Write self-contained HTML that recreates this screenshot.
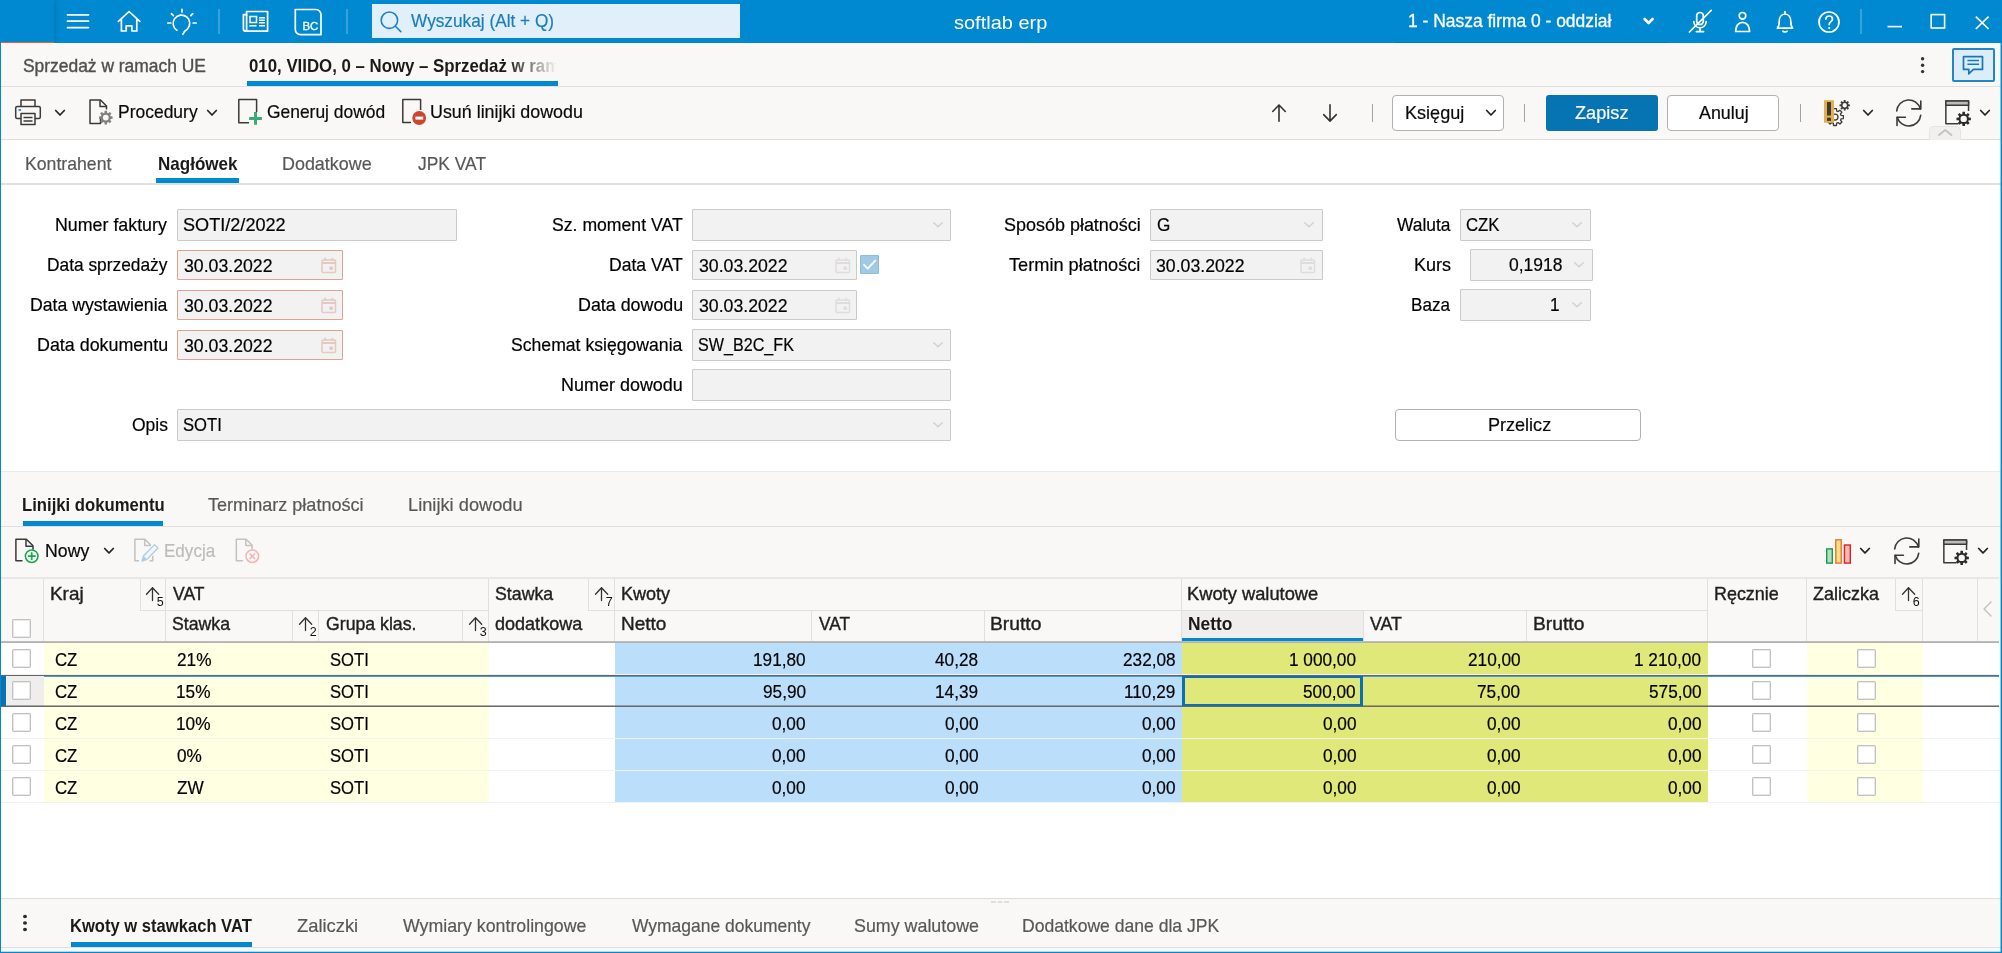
<!DOCTYPE html>
<html lang="pl"><head><meta charset="utf-8"><title>softlab erp</title>
<style>

html,body{margin:0;padding:0}
body{width:2002px;height:953px;overflow:hidden;position:relative;background:#fff;font-family:"Liberation Sans",sans-serif;font-size:18.6px;color:#000}
div,span,svg,header,nav,section,main,footer,label,button{position:absolute;box-sizing:border-box;display:block;margin:0;padding:0}
header,nav,section,main,footer{left:0;top:0}
#app{left:0;top:0;width:2002px;height:953px;will-change:transform}
.t{white-space:nowrap;line-height:20px;height:20px;transform-origin:0 0}

</style></head>
<body>
<div id="app">
<header>
<div style="left:0px;top:0px;width:2002px;height:43px;background:#0089d0;"></div>
<div style="left:1px;top:0px;width:53px;height:43px;box-shadow:2px 0 4px rgba(0,0,0,.10);"></div>
<div style="left:1px;top:42px;width:53px;height:1px;background:#e8632b;"></div>
<div style="left:1395px;top:42px;width:273px;height:1px;background:#0079b9;"></div>
<svg style="left:64px;top:8px;" width="28" height="28" viewBox="0 0 28 28" fill="none"><path d="M3.5 6.8h21M3.5 13.2h21M3.5 19.6h21" stroke="#fff" stroke-width="1.8" stroke-linecap="round"/></svg>
<svg style="left:115px;top:8px;" width="28" height="28" viewBox="0 0 28 28" fill="none"><path d="M3.4 13.4 14.1 3.5l10.7 9.9M6.4 11.2V23h4.8v-5.2h5.7V23h4.9V11.2" stroke="#fff" stroke-width="1.7" stroke-linecap="round" stroke-linejoin="round"/></svg>
<svg style="left:166px;top:4px;" width="32" height="34" viewBox="0 0 32 34" fill="none"><path d="M10.9 26.3A8.3 8.3 0 1 1 21.5 25Q17.8 27.3 16.9 30.3" stroke="#fff" stroke-width="1.7" stroke-linecap="round" stroke-linejoin="round"/><path d="M16 5.4v2.600M5.400 9.600l2 2M26.800 9.600l-2 2M1.800 19h3M27.200 19h3" stroke="#fff" stroke-width="1.7" stroke-linecap="round" stroke-linejoin="round"/></svg>
<div style="left:218px;top:9px;width:2px;height:25px;background:rgba(255,255,255,.22);"></div>
<svg style="left:241px;top:9px;" width="30" height="26" viewBox="0 0 30 26" fill="none"><path d="M5.6 2.500h21V22.100H4.400a2 2 0 0 1-2-2V5.600h3.200" stroke="#fff" stroke-width="1.7" stroke-linecap="round" stroke-linejoin="round"/><path d="M5.600 2.500v17.600a1.600 1.600 0 0 1-1.600 2" stroke="#fff" stroke-width="1.7" stroke-linecap="round" stroke-linejoin="round"/><rect x="9" y="7.500" width="6.500" height="6" stroke="#fff" stroke-width="1.500"/><path d="M18 8.800h6M18 11.300h6M18 13.800h6M8.300 16.800h7.200M18 16.800h6" stroke="#fff" stroke-width="1.400"/></svg>
<svg style="left:294px;top:7px;" width="30" height="30" viewBox="0 0 30 30" fill="none"><path d="M1.3 2.500h20.500a5.200 5.200 0 0 1 5.200 5.200V27.700H6.500a5.200 5.200 0 0 1-5.200-5.200Z" stroke="#fff" stroke-width="1.7" stroke-linecap="round" stroke-linejoin="round"/><text x="8.400" y="22.600" font-family="Liberation Sans,sans-serif" font-size="11.500" fill="#fff" stroke="#fff" stroke-width=".3" textLength="16">BC</text></svg>
<div style="left:346px;top:9px;width:2px;height:25px;background:rgba(255,255,255,.22);"></div>
<div style="left:372px;top:4px;width:368px;height:34px;background:#e0effa;"></div>
<svg style="left:379px;top:8px;" width="26" height="26" viewBox="0 0 26 26" fill="none"><circle cx="10.4" cy="12.2" r="8.2" stroke="#1a84c6" stroke-width="1.6"/><path d="M16.4 18.2 21.800 23.600" stroke="#1a84c6" stroke-width="1.600" stroke-linecap="round"/></svg>
<span class="t" style="left:410.92px;top:10.70px;color:#1a7ebd;transform:scaleX(0.9275);-webkit-text-stroke:0.2px #1a7ebd;">Wyszukaj (Alt + Q)</span>
<span class="t" style="left:954.44px;top:12.70px;font-size:19px;color:#fff;transform:scaleX(1.0527);">softlab erp</span>
<span class="t" style="left:1408.37px;top:10.70px;color:#fff;transform:scaleX(0.9372);-webkit-text-stroke:0.3px #fff;">1 - Nasza firma 0 - oddział</span>
<svg style="left:1640px;top:14px;" width="16" height="14" viewBox="0 0 16 14" fill="none"><path d="M4.6 5 8.6 9 12.6 5" stroke="#fff" stroke-width="2.6" stroke-linecap="round" stroke-linejoin="round"/></svg>
<svg style="left:1686px;top:7px;" width="28" height="30" viewBox="0 0 28 30" fill="none"><path d="M14 5.5a3.3 3.3 0 0 1 3.3 3.3v5.400a3.300 3.300 0 0 1-6.600 0V8.800A3.300 3.300 0 0 1 14 5.500Z" stroke="#fff" stroke-width="1.7" stroke-linecap="round" stroke-linejoin="round"/><path d="M7.800 14.600a6.200 6.200 0 0 0 12.400 0M14 20.800v3.600M10.400 24.600h7.200" stroke="#fff" stroke-width="1.7" stroke-linecap="round" stroke-linejoin="round"/><path d="M25.200 3.400 3.400 25" stroke="#fff" stroke-width="1.7" stroke-linecap="round" stroke-linejoin="round"/></svg>
<svg style="left:1730px;top:8px;" width="24" height="28" viewBox="0 0 24 28" fill="none"><circle cx="12.5" cy="7.8" r="3.3" stroke="#fff" stroke-width="1.7" stroke-linecap="round" stroke-linejoin="round"/><path d="M5.600 23.500c0-5.400 2.800-9.200 7-9.200s7 3.800 7 9.200Z" stroke="#fff" stroke-width="1.7" stroke-linecap="round" stroke-linejoin="round"/></svg>
<svg style="left:1773px;top:8px;" width="24" height="28" viewBox="0 0 24 28" fill="none"><path d="M4.4 20.2c1.6-1.6 1.8-3.6 1.8-6.6 0-4.2 2.200-7.600 5.800-7.600s5.800 3.400 5.800 7.600c0 3 .2 5 1.800 6.600Z" stroke="#fff" stroke-width="1.7" stroke-linecap="round" stroke-linejoin="round"/><path d="M12 3.600v2.200M10 23.200c.6.900 3.400.900 4 0" stroke="#fff" stroke-width="1.7" stroke-linecap="round" stroke-linejoin="round"/></svg>
<svg style="left:1816px;top:9px;" width="26" height="26" viewBox="0 0 26 26" fill="none"><circle cx="13" cy="13" r="10" stroke="#fff" stroke-width="1.7" stroke-linecap="round" stroke-linejoin="round"/><path d="M9.8 10.2c.2-2 1.500-3.200 3.300-3.200 2 0 3.400 1.300 3.400 3 0 2.600-3.300 2.700-3.300 5.400" stroke="#fff" stroke-width="1.7" stroke-linecap="round" stroke-linejoin="round"/><circle cx="13.200" cy="19" r="1.100" fill="#fff"/></svg>
<div style="left:1860px;top:9px;width:2px;height:25px;background:rgba(255,255,255,.22);"></div>
<svg style="left:1884px;top:20px;" width="22" height="12" viewBox="0 0 22 12" fill="none"><path d="M3.5 6.6h14.500" stroke="#fff" stroke-width="1.600"/></svg>
<svg style="left:1926px;top:10px;" width="24" height="24" viewBox="0 0 24 24" fill="none"><rect x="5.2" y="4.6" width="13.400" height="13.400" stroke="#fff" stroke-width="1.600"/></svg>
<svg style="left:1970px;top:11px;" width="24" height="24" viewBox="0 0 24 24" fill="none"><path d="M5.8 5.7 18.600 18M18.600 5.700 5.800 18" stroke="#fff" stroke-width="1.600"/></svg>
</header>
<nav>
<div style="left:0px;top:43px;width:2002px;height:44px;background:#f9f8f6;"></div>
<div style="left:0px;top:86px;width:2002px;height:1px;background:#e1dfdd;"></div>
<span class="t" style="left:23.21px;top:55.70px;color:#4f4f4f;transform:scaleX(0.9364);-webkit-text-stroke:0.4px #4f4f4f;">Sprzedaż w ramach UE</span>
<span class="t fade" style="left:248.73px;top:55.70px;font-weight:bold;color:#1a1a1a;transform:scaleX(0.9040);width:341px;overflow:hidden;-webkit-mask-image:linear-gradient(90deg,#000 286px,transparent 341px);mask-image:linear-gradient(90deg,#000 286px,transparent 341px);">010, VIIDO, 0 – Nowy – Sprzedaż w ramach UE</span>
<div style="left:247px;top:81px;width:311px;height:5px;background:#0089d0;"></div>
<svg style="left:1916px;top:53px;" width="12" height="24" viewBox="0 0 12 24" fill="none"><circle cx="6.6" cy="5.8" r="1.7" fill="#333"/><circle cx="6.6" cy="12.2" r="1.7" fill="#333"/><circle cx="6.600" cy="18.600" r="1.700" fill="#333"/></svg>
<div style="left:1952px;top:48px;width:43px;height:34px;background:#dcedf8;border:2px solid #2285c4;border-radius:2px;"></div>
<svg style="left:1960px;top:54px;" width="28" height="24" viewBox="0 0 28 24" fill="none"><path d="M3.5 2.6h19v12.800H13.400l-4.600 4.400v-4.400H3.500Z" stroke="#1479bb" stroke-width="1.700" stroke-linejoin="round"/><path d="M7.400 6.500h11.600M7.400 10.200h11.600" stroke="#1479bb" stroke-width="1.500"/></svg>
</nav>
<section class="toolbar">
<div style="left:0px;top:87px;width:2002px;height:53px;background:#f9f8f6;"></div>
<div style="left:0px;top:139px;width:2002px;height:1px;background:#e1dfdd;"></div>
<svg style="left:13px;top:97px;" width="30" height="30" viewBox="0 0 30 30" fill="none"><path d="M8 9.5V3h14v6.500" stroke="#3b3a39" stroke-width="1.5" stroke-linejoin="round"/><rect x="2.7" y="9.5" width="24.600" height="12" rx="1.500" stroke="#3b3a39" stroke-width="1.5" stroke-linejoin="round"/><rect x="8" y="16.500" width="14" height="11" fill="#f9f8f6" stroke="#3b3a39" stroke-width="1.5" stroke-linejoin="round"/><path d="M10.500 20.500h9M10.500 24h9" stroke="#3b3a39" stroke-width="1.300"/><path d="M5.500 13h2.600" stroke="#1e88e5" stroke-width="1.800"/></svg>
<svg style="left:53px;top:107.5px;" width="14" height="10" viewBox="0 0 14 10" fill="none"><path d="M2.7 2.5 7 7 11.3 2.5" stroke="#222" stroke-width="1.7" stroke-linecap="round" stroke-linejoin="round"/></svg>
<svg style="left:87px;top:97px;" width="30" height="30" viewBox="0 0 30 30" fill="none"><path d="M13.5 20.5v6H3V3h10.500l6 6v3.500" stroke="#3b3a39" stroke-width="1.5" stroke-linejoin="round"/><path d="M13 3v6.500h6.500" stroke="#3b3a39" stroke-width="1.5" stroke-linejoin="round"/><path d="M17.47 15.78L17.63 13.80L19.97 13.80L20.13 15.78L21.26 16.25L22.78 14.97L24.43 16.62L23.15 18.14L23.62 19.27L25.60 19.43L25.60 21.77L23.62 21.93L23.15 23.06L24.43 24.58L22.78 26.23L21.26 24.95L20.13 25.42L19.97 27.40L17.63 27.40L17.47 25.42L16.34 24.95L14.82 26.23L13.17 24.58L14.45 23.06L13.98 21.93L12.00 21.77L12.00 19.43L13.98 19.27L14.45 18.14L13.17 16.62L14.82 14.97L16.34 16.25ZM15.90 20.60a2.9 2.9 0 1 0 5.80 0a2.9 2.9 0 1 0 -5.80 0Z" fill="#808080" fill-rule="evenodd"/></svg>
<span class="t" style="left:118.17px;top:101.70px;color:#0a0a0a;transform:scaleX(0.9398);-webkit-text-stroke:0.2px #0a0a0a;">Procedury</span>
<svg style="left:205px;top:107.5px;" width="14" height="10" viewBox="0 0 14 10" fill="none"><path d="M2.7 2.5 7 7 11.3 2.5" stroke="#222" stroke-width="1.7" stroke-linecap="round" stroke-linejoin="round"/></svg>
<svg style="left:236px;top:97px;" width="30" height="30" viewBox="0 0 30 30" fill="none"><path d="M20.6 15V2.6H2.800v23.200H13" stroke="#3b3a39" stroke-width="1.5" stroke-linejoin="round"/><path d="M19.500 15v12.800M13.100 21.400h12.800" stroke="#3daa78" stroke-width="3"/></svg>
<span class="t" style="left:266.92px;top:101.70px;color:#0a0a0a;transform:scaleX(0.9370);-webkit-text-stroke:0.2px #0a0a0a;">Generuj dowód</span>
<svg style="left:400px;top:97px;" width="30" height="30" viewBox="0 0 30 30" fill="none"><path d="M20.6 13V2.6H2.800v22.800H11" stroke="#3b3a39" stroke-width="1.5" stroke-linejoin="round"/><circle cx="19.200" cy="21" r="6.900" fill="#cf4530"/><path d="M15.400 21.100h7.800" stroke="#fff" stroke-width="3"/></svg>
<span class="t" style="left:430.22px;top:101.70px;color:#0a0a0a;transform:scaleX(0.9607);-webkit-text-stroke:0.2px #0a0a0a;">Usuń linijki dowodu</span>
<svg style="left:1268px;top:101px;" width="22" height="24" viewBox="0 0 22 24" fill="none"><path d="M11 20.300V4M4.700 10.500 11 4l6.300 6.500" stroke="#333" stroke-width="1.600" stroke-linecap="round" stroke-linejoin="round"/></svg>
<svg style="left:1319px;top:101px;" width="22" height="24" viewBox="0 0 22 24" fill="none"><path d="M11 3.800V20M4.700 13.600 11 20.100l6.300-6.500" stroke="#333" stroke-width="1.600" stroke-linecap="round" stroke-linejoin="round"/></svg>
<div style="left:1372px;top:104px;width:1px;height:18px;background:#a3a19f;"></div>
<div style="left:1524px;top:104px;width:1px;height:18px;background:#a3a19f;"></div>
<div style="left:1800px;top:104px;width:1px;height:18px;background:#a3a19f;"></div>
<div style="left:1392px;top:95px;width:112px;height:36px;background:#fff;border:1px solid #b3b0ad;border-radius:4px;"></div>
<span class="t" style="left:1405.12px;top:102.70px;color:#0a0a0a;transform:scaleX(0.9721);-webkit-text-stroke:0.2px #0a0a0a;">Księguj</span>
<svg style="left:1484px;top:107.5px;" width="14" height="10" viewBox="0 0 14 10" fill="none"><path d="M2.7 2.5 7 7 11.3 2.5" stroke="#222" stroke-width="1.7" stroke-linecap="round" stroke-linejoin="round"/></svg>
<div class="btn" style="left:1546px;top:95px;width:112px;height:36px;background:#0674b3;border-radius:3px;"></div>
<span class="t" style="left:1575.02px;top:102.70px;color:#fff;transform:scaleX(0.9762);-webkit-text-stroke:0.2px #fff;">Zapisz</span>
<div style="left:1667px;top:95px;width:112px;height:36px;background:#fff;border:1px solid #b3b0ad;border-radius:4px;"></div>
<span class="t" style="left:1699.37px;top:102.70px;color:#0a0a0a;transform:scaleX(0.9600);-webkit-text-stroke:0.2px #0a0a0a;">Anuluj</span>
<svg style="left:1822px;top:97px;" width="32" height="32" viewBox="0 0 32 32" fill="none"><path d="M11.32 14.03L11.56 11.72L14.44 11.72L14.68 14.03L16.11 14.62L17.91 13.16L19.94 15.19L18.48 16.99L19.07 18.42L21.38 18.66L21.38 21.54L19.07 21.78L18.48 23.21L19.94 25.01L17.91 27.04L16.11 25.58L14.68 26.17L14.44 28.48L11.56 28.48L11.32 26.17L9.89 25.58L8.09 27.04L6.06 25.01L7.52 23.21L6.93 21.78L4.62 21.54L4.62 18.66L6.93 18.42L7.52 16.99L6.06 15.19L8.09 13.16L9.89 14.62Z" fill="#f9f8f6" stroke="#3b3a39" stroke-width="1.3" stroke-linejoin="round"/><circle cx="13" cy="20.1" r="3" fill="#f9f8f6" stroke="#3b3a39" stroke-width="1.3"/><rect x="2" y="3.200" width="10" height="22.500" fill="#e3b04b"/><rect x="5" y="5" width="4" height="13.500" fill="#3b3a39"/><rect x="5" y="20.700" width="4" height="3.200" fill="#3b3a39"/><path d="M21.69 4.64L21.80 3.08L23.60 3.08L23.71 4.64L24.57 4.99L25.76 3.97L27.03 5.24L26.01 6.43L26.36 7.29L27.92 7.40L27.92 9.20L26.36 9.31L26.01 10.17L27.03 11.36L25.76 12.63L24.57 11.61L23.71 11.96L23.60 13.52L21.80 13.52L21.69 11.96L20.83 11.61L19.64 12.63L18.37 11.36L19.39 10.17L19.04 9.31L17.48 9.20L17.48 7.40L19.04 7.29L19.39 6.43L18.37 5.24L19.64 3.97L20.83 4.99ZM20.50 8.30a2.2 2.2 0 1 0 4.40 0a2.2 2.2 0 1 0 -4.40 0Z" fill="#3b3a39" fill-rule="evenodd"/></svg>
<svg style="left:1861px;top:107.5px;" width="14" height="10" viewBox="0 0 14 10" fill="none"><path d="M2.7 2.5 7 7 11.3 2.5" stroke="#222" stroke-width="1.7" stroke-linecap="round" stroke-linejoin="round"/></svg>
<svg style="left:1893px;top:97px;" width="32" height="32" viewBox="0 0 32 32" fill="none"><path d="M3.700 14A12 12 0 0 1 27.300 12M27.700 18.400A12 12 0 0 1 4.300 20.400" stroke="#3b3a39" stroke-width="1.600" stroke-linecap="round"/><path d="M27.800 4v7.900h-9M4 28.400V20.300h8.400" stroke="#3b3a39" stroke-width="1.600" stroke-linecap="round" stroke-linejoin="round"/></svg>
<svg style="left:1943px;top:97px;" width="30" height="30" viewBox="0 0 30 30" fill="none"><path d="M15.400 26.750H2.850V3.950h22.700v10" stroke="#3b3a39" stroke-width="1.5" stroke-linejoin="round"/><rect x="2.850" y="3.950" width="22.700" height="4.300" fill="#bdbbb9" stroke="#3b3a39" stroke-width="1.5" stroke-linejoin="round"/><path d="M19.31 16.89L19.46 14.71L21.94 14.71L22.09 16.89L23.26 17.38L24.91 15.94L26.66 17.69L25.22 19.34L25.71 20.51L27.89 20.66L27.89 23.14L25.71 23.29L25.22 24.46L26.66 26.11L24.91 27.86L23.26 26.42L22.09 26.91L21.94 29.09L19.46 29.09L19.31 26.91L18.14 26.42L16.49 27.86L14.74 26.11L16.18 24.46L15.69 23.29L13.51 23.14L13.51 20.66L15.69 20.51L16.18 19.34L14.74 17.69L16.49 15.94L18.14 17.38ZM17.50 21.90a3.2 3.2 0 1 0 6.40 0a3.2 3.2 0 1 0 -6.40 0Z" fill="#2b2b2b" fill-rule="evenodd"/></svg>
<svg style="left:1978px;top:107.5px;" width="14" height="10" viewBox="0 0 14 10" fill="none"><path d="M2.7 2.5 7 7 11.3 2.5" stroke="#222" stroke-width="1.7" stroke-linecap="round" stroke-linejoin="round"/></svg>
<div style="left:1929px;top:126px;width:32px;height:14px;background:#f1f0ee;border:1px solid #e6e4e2;border-bottom:0;border-radius:5px 5px 0 0;"></div>
<svg style="left:1937px;top:127px;" width="16" height="10" viewBox="0 0 16 10" fill="none"><path d="M2 8 8.200 3l6.200 5" stroke="#c6c4c2" stroke-width="2" stroke-linecap="round" stroke-linejoin="round"/></svg>
</section>
<main>
<div style="left:0px;top:140px;width:2002px;height:332px;background:#fff;"></div>
<div style="left:0px;top:183px;width:2002px;height:2px;background:#e1dfdd;"></div>
<span class="t" style="left:24.55px;top:153.70px;color:#575757;transform:scaleX(0.9492);-webkit-text-stroke:0.2px #575757;">Kontrahent</span>
<span class="t" style="left:157.86px;top:153.70px;font-weight:bold;color:#1a1a1a;transform:scaleX(0.9159);">Nagłówek</span>
<div style="left:156px;top:178px;width:83px;height:5px;background:#0089d0;"></div>
<span class="t" style="left:282.33px;top:153.70px;color:#575757;transform:scaleX(0.9636);-webkit-text-stroke:0.2px #575757;">Dodatkowe</span>
<span class="t" style="left:418.33px;top:153.70px;color:#575757;transform:scaleX(0.9364);-webkit-text-stroke:0.2px #575757;">JPK VAT</span>
<label class="t" style="left:55.04px;top:214.70px;transform:scaleX(0.9581);-webkit-text-stroke:0.2px #000;">Numer faktury</label>
<div class="field" style="left:177px;top:209px;width:280px;height:32px;background:#f2f2f2;border:1px solid #cacaca;border-radius:1px;"></div>
<span class="t" style="left:183.38px;top:214.70px;transform:scaleX(0.9741);-webkit-text-stroke:0.2px #000;">SOTI/2/2022</span>
<label class="t" style="left:46.58px;top:254.70px;transform:scaleX(0.9321);-webkit-text-stroke:0.2px #000;">Data sprzedaży</label>
<label class="t" style="left:29.55px;top:294.70px;transform:scaleX(0.9497);-webkit-text-stroke:0.2px #000;">Data wystawienia</label>
<label class="t" style="left:37.03px;top:334.70px;transform:scaleX(0.9609);-webkit-text-stroke:0.2px #000;">Data dokumentu</label>
<div class="field" style="left:177px;top:250px;width:166px;height:30px;background:#f2f2f2;border:1px solid #dfa28f;border-radius:1px;"></div>
<span class="t" style="left:183.73px;top:255.70px;transform:scaleX(0.9514);-webkit-text-stroke:0.2px #000;">30.03.2022</span>
<svg style="left:320px;top:256px;" width="18" height="18" viewBox="0 0 18 18" fill="none"><rect x="2" y="4" width="13.500" height="12.500" rx="1" stroke="#e3c9c0" stroke-width="1.500"/><path d="M2 7h13.500" stroke="#e3c9c0" stroke-width="2"/><path d="M5.200 1.800v3M12.300 1.800v3" stroke="#e3c9c0" stroke-width="1.600"/><rect x="9.500" y="10.500" width="3.400" height="3.400" fill="#e3c9c0"/></svg>
<div class="field" style="left:177px;top:290px;width:166px;height:30px;background:#f2f2f2;border:1px solid #dfa28f;border-radius:1px;"></div>
<span class="t" style="left:183.73px;top:295.70px;transform:scaleX(0.9514);-webkit-text-stroke:0.2px #000;">30.03.2022</span>
<svg style="left:320px;top:296px;" width="18" height="18" viewBox="0 0 18 18" fill="none"><rect x="2" y="4" width="13.500" height="12.500" rx="1" stroke="#e3c9c0" stroke-width="1.500"/><path d="M2 7h13.500" stroke="#e3c9c0" stroke-width="2"/><path d="M5.200 1.800v3M12.300 1.800v3" stroke="#e3c9c0" stroke-width="1.600"/><rect x="9.500" y="10.500" width="3.400" height="3.400" fill="#e3c9c0"/></svg>
<div class="field" style="left:177px;top:330px;width:166px;height:30px;background:#f2f2f2;border:1px solid #dfa28f;border-radius:1px;"></div>
<span class="t" style="left:183.73px;top:335.70px;transform:scaleX(0.9514);-webkit-text-stroke:0.2px #000;">30.03.2022</span>
<svg style="left:320px;top:336px;" width="18" height="18" viewBox="0 0 18 18" fill="none"><rect x="2" y="4" width="13.500" height="12.500" rx="1" stroke="#e3c9c0" stroke-width="1.500"/><path d="M2 7h13.500" stroke="#e3c9c0" stroke-width="2"/><path d="M5.200 1.800v3M12.300 1.800v3" stroke="#e3c9c0" stroke-width="1.600"/><rect x="9.500" y="10.500" width="3.400" height="3.400" fill="#e3c9c0"/></svg>
<label class="t" style="left:131.67px;top:414.70px;transform:scaleX(0.9403);-webkit-text-stroke:0.2px #000;">Opis</label>
<div class="field" style="left:177px;top:409px;width:774px;height:32px;background:#f2f2f2;border:1px solid #cacaca;border-radius:1px;"></div>
<span class="t" style="left:183.45px;top:414.70px;transform:scaleX(0.8937);-webkit-text-stroke:0.2px #000;">SOTI</span>
<svg style="left:931px;top:420px;" width="14" height="10" viewBox="0 0 14 10" fill="none"><path d="M2.700 2.800 7 6.800 11.300 2.800" stroke="#d2d0ce" stroke-width="1.400" stroke-linecap="round" stroke-linejoin="round"/></svg>
<label class="t" style="left:551.70px;top:214.70px;transform:scaleX(0.9484);-webkit-text-stroke:0.2px #000;">Sz. moment VAT</label>
<div class="field" style="left:692px;top:209px;width:259px;height:32px;background:#f2f2f2;border:1px solid #cacaca;border-radius:1px;"></div>
<svg style="left:931px;top:220px;" width="14" height="10" viewBox="0 0 14 10" fill="none"><path d="M2.700 2.800 7 6.800 11.300 2.800" stroke="#d2d0ce" stroke-width="1.400" stroke-linecap="round" stroke-linejoin="round"/></svg>
<label class="t" style="left:608.76px;top:254.70px;transform:scaleX(0.9458);-webkit-text-stroke:0.2px #000;">Data VAT</label>
<div class="field" style="left:692px;top:250px;width:165px;height:30px;background:#f2f2f2;border:1px solid #cacaca;border-radius:1px;"></div>
<span class="t" style="left:698.73px;top:255.70px;transform:scaleX(0.9514);-webkit-text-stroke:0.2px #000;">30.03.2022</span>
<svg style="left:834px;top:256px;" width="18" height="18" viewBox="0 0 18 18" fill="none"><rect x="2" y="4" width="13.500" height="12.500" rx="1" stroke="#dfdddb" stroke-width="1.500"/><path d="M2 7h13.500" stroke="#dfdddb" stroke-width="2"/><path d="M5.200 1.800v3M12.300 1.800v3" stroke="#dfdddb" stroke-width="1.600"/><rect x="9.500" y="10.500" width="3.400" height="3.400" fill="#dfdddb"/></svg>
<div style="left:860px;top:255px;width:19px;height:19px;background:#9fc9e4;border:1px solid #8fbcd9;border-radius:1px;"></div>
<svg style="left:860px;top:255px;" width="19" height="19" viewBox="0 0 19 19" fill="none"><path d="M4 9.800 7.800 13.600 15.200 5.600" stroke="#fff" stroke-width="1.800" stroke-linecap="round" stroke-linejoin="round"/></svg>
<label class="t" style="left:577.93px;top:294.70px;transform:scaleX(0.9602);-webkit-text-stroke:0.2px #000;">Data dowodu</label>
<div class="field" style="left:692px;top:290px;width:165px;height:30px;background:#f2f2f2;border:1px solid #cacaca;border-radius:1px;"></div>
<span class="t" style="left:698.73px;top:295.70px;transform:scaleX(0.9514);-webkit-text-stroke:0.2px #000;">30.03.2022</span>
<svg style="left:834px;top:296px;" width="18" height="18" viewBox="0 0 18 18" fill="none"><rect x="2" y="4" width="13.500" height="12.500" rx="1" stroke="#dfdddb" stroke-width="1.500"/><path d="M2 7h13.500" stroke="#dfdddb" stroke-width="2"/><path d="M5.200 1.800v3M12.300 1.800v3" stroke="#dfdddb" stroke-width="1.600"/><rect x="9.500" y="10.500" width="3.400" height="3.400" fill="#dfdddb"/></svg>
<label class="t" style="left:510.60px;top:334.70px;transform:scaleX(0.9473);-webkit-text-stroke:0.2px #000;">Schemat księgowania</label>
<div class="field" style="left:692px;top:329px;width:259px;height:32px;background:#f2f2f2;border:1px solid #cacaca;border-radius:1px;"></div>
<span class="t" style="left:697.87px;top:334.70px;transform:scaleX(0.8672);-webkit-text-stroke:0.2px #000;">SW_B2C_FK</span>
<svg style="left:931px;top:340px;" width="14" height="10" viewBox="0 0 14 10" fill="none"><path d="M2.700 2.800 7 6.800 11.300 2.800" stroke="#d2d0ce" stroke-width="1.400" stroke-linecap="round" stroke-linejoin="round"/></svg>
<label class="t" style="left:561.33px;top:374.70px;transform:scaleX(0.9662);-webkit-text-stroke:0.2px #000;">Numer dowodu</label>
<div class="field" style="left:692px;top:369px;width:259px;height:32px;background:#f2f2f2;border:1px solid #cacaca;border-radius:1px;"></div>
<label class="t" style="left:1004.08px;top:214.70px;transform:scaleX(0.9659);-webkit-text-stroke:0.2px #000;">Sposób płatności</label>
<div class="field" style="left:1150px;top:209px;width:173px;height:32px;background:#f2f2f2;border:1px solid #cacaca;border-radius:1px;"></div>
<span class="t" style="left:1156.53px;top:214.70px;transform:scaleX(0.9250);-webkit-text-stroke:0.2px #000;">G</span>
<svg style="left:1302px;top:220px;" width="14" height="10" viewBox="0 0 14 10" fill="none"><path d="M2.700 2.800 7 6.800 11.300 2.800" stroke="#d2d0ce" stroke-width="1.400" stroke-linecap="round" stroke-linejoin="round"/></svg>
<label class="t" style="left:1009.49px;top:254.70px;transform:scaleX(0.9780);-webkit-text-stroke:0.2px #000;">Termin płatności</label>
<div class="field" style="left:1150px;top:250px;width:173px;height:30px;background:#f2f2f2;border:1px solid #cacaca;border-radius:1px;"></div>
<span class="t" style="left:1156.33px;top:255.70px;transform:scaleX(0.9514);-webkit-text-stroke:0.2px #000;">30.03.2022</span>
<svg style="left:1299px;top:256px;" width="18" height="18" viewBox="0 0 18 18" fill="none"><rect x="2" y="4" width="13.500" height="12.500" rx="1" stroke="#dfdddb" stroke-width="1.500"/><path d="M2 7h13.500" stroke="#dfdddb" stroke-width="2"/><path d="M5.200 1.800v3M12.300 1.800v3" stroke="#dfdddb" stroke-width="1.600"/><rect x="9.500" y="10.500" width="3.400" height="3.400" fill="#dfdddb"/></svg>
<label class="t" style="left:1396.82px;top:214.70px;transform:scaleX(0.9367);-webkit-text-stroke:0.2px #000;">Waluta</label>
<div class="field" style="left:1460px;top:209px;width:131px;height:32px;background:#f2f2f2;border:1px solid #cacaca;border-radius:1px;"></div>
<span class="t" style="left:1466.15px;top:214.70px;transform:scaleX(0.9016);-webkit-text-stroke:0.2px #000;">CZK</span>
<svg style="left:1570px;top:220px;" width="14" height="10" viewBox="0 0 14 10" fill="none"><path d="M2.700 2.800 7 6.800 11.300 2.800" stroke="#d2d0ce" stroke-width="1.400" stroke-linecap="round" stroke-linejoin="round"/></svg>
<label class="t" style="left:1413.92px;top:254.70px;transform:scaleX(0.9710);-webkit-text-stroke:0.2px #000;">Kurs</label>
<div class="field" style="left:1470px;top:249px;width:123px;height:32px;background:#f2f2f2;border:1px solid #cacaca;border-radius:1px;"></div>
<span class="t" style="left:1508.92px;top:254.70px;transform:scaleX(0.9394);-webkit-text-stroke:0.2px #000;">0,1918</span>
<svg style="left:1572px;top:260px;" width="14" height="10" viewBox="0 0 14 10" fill="none"><path d="M2.700 2.800 7 6.800 11.300 2.800" stroke="#d2d0ce" stroke-width="1.400" stroke-linecap="round" stroke-linejoin="round"/></svg>
<label class="t" style="left:1411.40px;top:294.70px;transform:scaleX(0.9200);-webkit-text-stroke:0.2px #000;">Baza</label>
<div class="field" style="left:1460px;top:289px;width:131px;height:32px;background:#f2f2f2;border:1px solid #cacaca;border-radius:1px;"></div>
<span class="t" style="left:1550.07px;top:294.70px;transform:scaleX(0.9250);-webkit-text-stroke:0.2px #000;">1</span>
<svg style="left:1570px;top:300px;" width="14" height="10" viewBox="0 0 14 10" fill="none"><path d="M2.700 2.800 7 6.800 11.300 2.800" stroke="#d2d0ce" stroke-width="1.400" stroke-linecap="round" stroke-linejoin="round"/></svg>
<div style="left:1395px;top:409px;width:246px;height:32px;background:#fff;border:1px solid #b3b0ad;border-radius:4px;"></div>
<span class="t" style="left:1488.32px;top:414.70px;color:#0a0a0a;transform:scaleX(0.9704);-webkit-text-stroke:0.2px #0a0a0a;">Przelicz</span>
</main>
<section class="lines">
<div style="left:0px;top:471px;width:2002px;height:107px;background:#f9f8f6;"></div>
<div style="left:0px;top:471px;width:2002px;height:1px;background:#ecebe9;"></div>
<div style="left:0px;top:526px;width:2002px;height:1px;background:#e1dfdd;"></div>
<span class="t" style="left:21.68px;top:494.70px;font-weight:bold;color:#1a1a1a;transform:scaleX(0.8975);">Linijki dokumentu</span>
<div style="left:23px;top:521px;width:140px;height:5px;background:#0089d0;"></div>
<span class="t" style="left:208.19px;top:494.70px;color:#575757;transform:scaleX(0.9713);-webkit-text-stroke:0.2px #575757;">Terminarz płatności</span>
<span class="t" style="left:407.50px;top:494.70px;color:#575757;transform:scaleX(0.9818);-webkit-text-stroke:0.2px #575757;">Linijki dowodu</span>
<svg style="left:13px;top:536px;" width="26" height="28" viewBox="0 0 26 28" fill="none"><path d="M9.500 24.700H2.900V3.200h10.500l6.600 6.600v4" stroke="#3b3a39" stroke-width="1.5" stroke-linejoin="round"/><path d="M13 3.200v7h7" stroke="#3b3a39" stroke-width="1.5" stroke-linejoin="round"/><circle cx="18.700" cy="20.200" r="6.300" fill="#f9f8f6" stroke="#12a84b" stroke-width="1.500"/><path d="M18.700 16.300v7.800M14.800 20.200h7.800" stroke="#12a84b" stroke-width="1.700"/></svg>
<span class="t" style="left:45.15px;top:540.70px;color:#0a0a0a;transform:scaleX(0.9522);-webkit-text-stroke:0.2px #0a0a0a;">Nowy</span>
<svg style="left:102px;top:545.6px;" width="14" height="10" viewBox="0 0 14 10" fill="none"><path d="M2.7 2.5 7 7 11.3 2.5" stroke="#222" stroke-width="1.7" stroke-linecap="round" stroke-linejoin="round"/></svg>
<svg style="left:132px;top:536px;" width="28" height="28" viewBox="0 0 28 28" fill="none"><path d="M7 24.700H2.900V3.200h10l6 6" stroke="#c4c2c0" stroke-width="1.500" stroke-linejoin="round"/><path d="M12.700 3.200v6.300h6.300" stroke="#c4c2c0" stroke-width="1.500" stroke-linejoin="round"/><path d="M17.500 24.700h3.300v-5" stroke="#c4c2c0" stroke-width="1.500" stroke-linejoin="round"/><path d="M10 25.200l1.600-5.400L22.600 8.600l3.400 3.400L14.900 23.400Z" fill="#f1f7fc" stroke="#a9cdea" stroke-width="1.300" stroke-linejoin="round"/><path d="M10 25.200l1.600-5.400 3.300 3.600Z" fill="#a9cdea"/></svg>
<span class="t" style="left:164.20px;top:540.70px;color:#bdbbb9;transform:scaleX(0.9171);-webkit-text-stroke:0.2px #bdbbb9;">Edycja</span>
<svg style="left:233px;top:536px;" width="28" height="28" viewBox="0 0 28 28" fill="none"><path d="M10 24.700H3.300V3.200h9.800l6 6v4.500" stroke="#c4c2c0" stroke-width="1.500" stroke-linejoin="round"/><path d="M12.800 3.200v6.300h6.300" stroke="#c4c2c0" stroke-width="1.500" stroke-linejoin="round"/><circle cx="19.300" cy="20.200" r="6.300" fill="#f9f8f6" stroke="#f3b4b6" stroke-width="1.500"/><path d="M16.600 17.500l5.400 5.400M22 17.500l-5.400 5.400" stroke="#f3b4b6" stroke-width="1.500"/></svg>
<svg style="left:1822px;top:536px;" width="32" height="30" viewBox="0 0 32 30" fill="none"><rect x="4.700" y="12.900" width="5.600" height="14.200" fill="#b9dcbb" stroke="#0fa14a" stroke-width="1.400"/><rect x="13.800" y="3.800" width="5.400" height="23.300" fill="#fbe08d" stroke="#e87722" stroke-width="1.400"/><rect x="22.400" y="9" width="5.900" height="18.100" fill="#f5b7b7" stroke="#e02020" stroke-width="1.400"/></svg>
<svg style="left:1858px;top:546px;" width="14" height="10" viewBox="0 0 14 10" fill="none"><path d="M2.7 2.5 7 7 11.3 2.5" stroke="#222" stroke-width="1.7" stroke-linecap="round" stroke-linejoin="round"/></svg>
<svg style="left:1891px;top:535.3px;" width="32" height="32" viewBox="0 0 32 32" fill="none"><path d="M3.700 14A12 12 0 0 1 27.300 12M27.700 18.400A12 12 0 0 1 4.300 20.400" stroke="#3b3a39" stroke-width="1.600" stroke-linecap="round"/><path d="M27.800 4v7.900h-9M4 28.400V20.300h8.400" stroke="#3b3a39" stroke-width="1.600" stroke-linecap="round" stroke-linejoin="round"/></svg>
<svg style="left:1941.3px;top:535.6px;" width="30" height="30" viewBox="0 0 30 30" fill="none"><path d="M15.400 26.750H2.850V3.950h22.700v10" stroke="#3b3a39" stroke-width="1.5" stroke-linejoin="round"/><rect x="2.850" y="3.950" width="22.700" height="4.300" fill="#bdbbb9" stroke="#3b3a39" stroke-width="1.5" stroke-linejoin="round"/><path d="M19.31 16.89L19.46 14.71L21.94 14.71L22.09 16.89L23.26 17.38L24.91 15.94L26.66 17.69L25.22 19.34L25.71 20.51L27.89 20.66L27.89 23.14L25.71 23.29L25.22 24.46L26.66 26.11L24.91 27.86L23.26 26.42L22.09 26.91L21.94 29.09L19.46 29.09L19.31 26.91L18.14 26.42L16.49 27.86L14.74 26.11L16.18 24.46L15.69 23.29L13.51 23.14L13.51 20.66L15.69 20.51L16.18 19.34L14.74 17.69L16.49 15.94L18.14 17.38ZM17.50 21.90a3.2 3.2 0 1 0 6.40 0a3.2 3.2 0 1 0 -6.40 0Z" fill="#2b2b2b" fill-rule="evenodd"/></svg>
<svg style="left:1976px;top:546.2px;" width="14" height="10" viewBox="0 0 14 10" fill="none"><path d="M2.7 2.5 7 7 11.3 2.5" stroke="#222" stroke-width="1.7" stroke-linecap="round" stroke-linejoin="round"/></svg>
</section>
<section class="grid">
<div style="left:1px;top:578px;width:1999px;height:64px;background:#f9f8f6;"></div>
<div style="left:1px;top:577px;width:1998px;height:2px;background:#e9e7e5;"></div>
<div style="left:43px;top:579px;width:1px;height:63px;background:#e1dfdd;"></div>
<div style="left:140px;top:579px;width:1px;height:31px;background:#e1dfdd;"></div>
<div style="left:165px;top:579px;width:1px;height:63px;background:#e1dfdd;"></div>
<div style="left:140px;top:610px;width:349px;height:1px;background:#e1dfdd;"></div>
<div style="left:292px;top:610px;width:1px;height:32px;background:#e1dfdd;"></div>
<div style="left:318px;top:610px;width:1px;height:32px;background:#e1dfdd;"></div>
<div style="left:462px;top:610px;width:1px;height:32px;background:#e1dfdd;"></div>
<div style="left:488px;top:579px;width:1px;height:63px;background:#e1dfdd;"></div>
<div style="left:588px;top:579px;width:1px;height:31px;background:#e1dfdd;"></div>
<div style="left:588px;top:610px;width:27px;height:1px;background:#e1dfdd;"></div>
<div style="left:614px;top:579px;width:1px;height:63px;background:#e1dfdd;"></div>
<div style="left:615px;top:610px;width:1092px;height:1px;background:#e1dfdd;"></div>
<div style="left:811px;top:610px;width:1px;height:32px;background:#e1dfdd;"></div>
<div style="left:984px;top:610px;width:1px;height:32px;background:#e1dfdd;"></div>
<div style="left:1181px;top:579px;width:1px;height:63px;background:#e1dfdd;"></div>
<div style="left:1363px;top:610px;width:1px;height:32px;background:#e1dfdd;"></div>
<div style="left:1526px;top:610px;width:1px;height:32px;background:#e1dfdd;"></div>
<div style="left:1707px;top:579px;width:1px;height:63px;background:#e1dfdd;"></div>
<div style="left:1806px;top:579px;width:1px;height:63px;background:#e1dfdd;"></div>
<div style="left:1895px;top:579px;width:1px;height:31px;background:#e1dfdd;"></div>
<div style="left:1895px;top:610px;width:28px;height:1px;background:#e1dfdd;"></div>
<div style="left:1922px;top:579px;width:1px;height:63px;background:#e1dfdd;"></div>
<div style="left:1977px;top:579px;width:1px;height:63px;background:#e1dfdd;"></div>
<div style="left:1182px;top:611px;width:181px;height:30px;background:#efeeec;"></div>
<div style="left:1px;top:641px;width:1998px;height:1px;background:#bebcba;"></div>
<div style="left:1px;top:642px;width:1998px;height:1px;background:#b4b2b0;"></div>
<div style="left:1182px;top:638px;width:181px;height:3px;background:#0089d0;"></div>
<div class="cb" style="left:12px;top:619px;width:19px;height:19px;background:#fff;border:1px solid #c2c2c2;border-radius:1px;box-shadow:inset 0 0 0 1px rgba(200,200,200,.4);"></div>
<span class="t" style="left:49.65px;top:583.70px;color:#1f1f1f;transform:scaleX(1.0166);-webkit-text-stroke:0.4px #1f1f1f;">Kraj</span>
<svg style="left:143px;top:583px;" width="24" height="26" viewBox="0 0 24 26" fill="none"><path d="M9.500 17.500V4.700M3.500 11.300 9.500 4.700l6.200 6.600" stroke="#333" stroke-width="1.300" stroke-linecap="round" stroke-linejoin="round"/><text x="13.800" y="22.600" font-family="Liberation Sans,sans-serif" font-size="12.500" fill="#111">5</text></svg>
<span class="t" style="left:172.92px;top:583.70px;color:#1f1f1f;transform:scaleX(0.9421);-webkit-text-stroke:0.4px #1f1f1f;">VAT</span>
<span class="t" style="left:172.40px;top:613.70px;color:#1f1f1f;transform:scaleX(0.9510);-webkit-text-stroke:0.4px #1f1f1f;">Stawka</span>
<svg style="left:296px;top:613px;" width="24" height="26" viewBox="0 0 24 26" fill="none"><path d="M9.500 17.500V4.700M3.500 11.300 9.500 4.700l6.200 6.600" stroke="#333" stroke-width="1.300" stroke-linecap="round" stroke-linejoin="round"/><text x="13.800" y="22.600" font-family="Liberation Sans,sans-serif" font-size="12.500" fill="#111">2</text></svg>
<span class="t" style="left:325.71px;top:613.70px;color:#1f1f1f;transform:scaleX(0.9516);-webkit-text-stroke:0.4px #1f1f1f;">Grupa klas.</span>
<svg style="left:466px;top:613px;" width="24" height="26" viewBox="0 0 24 26" fill="none"><path d="M9.500 17.500V4.700M3.500 11.300 9.500 4.700l6.200 6.600" stroke="#333" stroke-width="1.300" stroke-linecap="round" stroke-linejoin="round"/><text x="13.800" y="22.600" font-family="Liberation Sans,sans-serif" font-size="12.500" fill="#111">3</text></svg>
<span class="t" style="left:495.19px;top:583.70px;color:#1f1f1f;transform:scaleX(0.9543);-webkit-text-stroke:0.4px #1f1f1f;">Stawka</span>
<svg style="left:592px;top:583px;" width="24" height="26" viewBox="0 0 24 26" fill="none"><path d="M9.500 17.500V4.700M3.500 11.300 9.500 4.700l6.200 6.600" stroke="#333" stroke-width="1.300" stroke-linecap="round" stroke-linejoin="round"/><text x="13.800" y="22.600" font-family="Liberation Sans,sans-serif" font-size="12.500" fill="#111">7</text></svg>
<span class="t" style="left:495.24px;top:613.70px;color:#1f1f1f;transform:scaleX(0.9699);-webkit-text-stroke:0.4px #1f1f1f;">dodatkowa</span>
<span class="t" style="left:621.12px;top:583.70px;color:#1f1f1f;transform:scaleX(0.9697);-webkit-text-stroke:0.4px #1f1f1f;">Kwoty</span>
<span class="t" style="left:621.04px;top:613.70px;color:#1f1f1f;transform:scaleX(1.0202);-webkit-text-stroke:0.4px #1f1f1f;">Netto</span>
<span class="t" style="left:819.12px;top:613.70px;color:#1f1f1f;transform:scaleX(0.9300);-webkit-text-stroke:0.4px #1f1f1f;">VAT</span>
<span class="t" style="left:990.42px;top:613.70px;color:#1f1f1f;transform:scaleX(1.0356);-webkit-text-stroke:0.4px #1f1f1f;">Brutto</span>
<span class="t" style="left:1187.10px;top:583.70px;color:#1f1f1f;transform:scaleX(0.9847);-webkit-text-stroke:0.4px #1f1f1f;">Kwoty walutowe</span>
<span class="t" style="left:1187.84px;top:613.70px;font-weight:bold;color:#1a1a1a;transform:scaleX(0.9351);">Netto</span>
<span class="t" style="left:1369.52px;top:613.70px;color:#1f1f1f;transform:scaleX(0.9543);-webkit-text-stroke:0.4px #1f1f1f;">VAT</span>
<span class="t" style="left:1532.62px;top:613.70px;color:#1f1f1f;transform:scaleX(1.0356);-webkit-text-stroke:0.4px #1f1f1f;">Brutto</span>
<span class="t" style="left:1713.53px;top:583.70px;color:#1f1f1f;transform:scaleX(0.9638);-webkit-text-stroke:0.4px #1f1f1f;">Ręcznie</span>
<span class="t" style="left:1813.43px;top:583.70px;color:#1f1f1f;transform:scaleX(0.9671);-webkit-text-stroke:0.4px #1f1f1f;">Zaliczka</span>
<svg style="left:1899px;top:583px;" width="24" height="26" viewBox="0 0 24 26" fill="none"><path d="M9.500 17.500V4.700M3.500 11.300 9.500 4.700l6.200 6.600" stroke="#333" stroke-width="1.300" stroke-linecap="round" stroke-linejoin="round"/><text x="13.800" y="22.600" font-family="Liberation Sans,sans-serif" font-size="12.500" fill="#111">6</text></svg>
<svg style="left:1980px;top:599px;" width="14" height="20" viewBox="0 0 14 20" fill="none"><path d="M11 3 4 10l7 7" stroke="#c2c0be" stroke-width="1.400" stroke-linecap="round" stroke-linejoin="round"/></svg>
<div class="row" style="left:0;top:0">
<div style="left:44px;top:643px;width:445px;height:31px;background:#ffffe1;"></div>
<div style="left:615px;top:643px;width:567px;height:31px;background:#bbdefb;"></div>
<div style="left:1182px;top:643px;width:526px;height:31px;background:#dfe879;"></div>
<div style="left:1807px;top:643px;width:116px;height:31px;background:#ffffe1;"></div>
<div style="left:1px;top:674px;width:1999px;height:1px;background:rgba(238,237,236,.8);"></div>
<div class="cb" style="left:12px;top:649px;width:19px;height:19px;background:#fff;border:1px solid #c2c2c2;border-radius:1px;box-shadow:inset 0 0 0 1px rgba(200,200,200,.4);"></div>
<span class="t" style="left:55.35px;top:649.70px;transform:scaleX(0.9025);-webkit-text-stroke:0.2px #000;">CZ</span>
<span class="t" style="left:176.93px;top:649.70px;transform:scaleX(0.9250);-webkit-text-stroke:0.2px #000;">21%</span>
<span class="t" style="left:330.45px;top:649.70px;transform:scaleX(0.8937);-webkit-text-stroke:0.2px #000;">SOTI</span>
<span class="t" style="left:753.25px;top:649.70px;transform:scaleX(0.9250);-webkit-text-stroke:0.2px #000;">191,80</span>
<span class="t" style="left:935.29px;top:649.70px;transform:scaleX(0.9250);-webkit-text-stroke:0.2px #000;">40,28</span>
<span class="t" style="left:1122.52px;top:649.70px;transform:scaleX(0.9250);-webkit-text-stroke:0.2px #000;">232,08</span>
<span class="t" style="left:1289.10px;top:649.70px;transform:scaleX(0.9250);-webkit-text-stroke:0.2px #000;">1 000,00</span>
<span class="t" style="left:1467.65px;top:649.70px;transform:scaleX(0.9250);-webkit-text-stroke:0.2px #000;">210,00</span>
<span class="t" style="left:1634.30px;top:649.70px;transform:scaleX(0.9250);-webkit-text-stroke:0.2px #000;">1 210,00</span>
<div class="cb" style="left:1752px;top:649px;width:19px;height:19px;background:#fff;border:1px solid #c2c2c2;border-radius:1px;box-shadow:inset 0 0 0 1px rgba(200,200,200,.4);"></div>
<div class="cb" style="left:1857px;top:649px;width:19px;height:19px;background:#fff;border:1px solid #c2c2c2;border-radius:1px;box-shadow:inset 0 0 0 1px rgba(200,200,200,.4);"></div>
</div>
<div class="row" style="left:0;top:0">
<div style="left:44px;top:675px;width:445px;height:31px;background:#ffffe1;"></div>
<div style="left:615px;top:675px;width:567px;height:31px;background:#bbdefb;"></div>
<div style="left:1182px;top:675px;width:526px;height:31px;background:#dfe879;"></div>
<div style="left:1807px;top:675px;width:116px;height:31px;background:#ffffe1;"></div>
<div style="left:1px;top:706px;width:1999px;height:1px;background:rgba(238,237,236,.8);"></div>
<div style="left:6px;top:675px;width:38px;height:31px;background:#efeeed;"></div>
<div class="cb" style="left:12px;top:681px;width:19px;height:19px;background:#fff;border:1px solid #c2c2c2;border-radius:1px;box-shadow:inset 0 0 0 1px rgba(200,200,200,.4);"></div>
<span class="t" style="left:55.35px;top:681.70px;transform:scaleX(0.9025);-webkit-text-stroke:0.2px #000;">CZ</span>
<span class="t" style="left:176.49px;top:681.70px;transform:scaleX(0.9250);-webkit-text-stroke:0.2px #000;">15%</span>
<span class="t" style="left:330.45px;top:681.70px;transform:scaleX(0.8937);-webkit-text-stroke:0.2px #000;">SOTI</span>
<span class="t" style="left:762.82px;top:681.70px;transform:scaleX(0.9250);-webkit-text-stroke:0.2px #000;">95,90</span>
<span class="t" style="left:935.36px;top:681.70px;transform:scaleX(0.9250);-webkit-text-stroke:0.2px #000;">14,39</span>
<span class="t" style="left:1123.87px;top:681.70px;transform:scaleX(0.9250);-webkit-text-stroke:0.2px #000;">110,29</span>
<span class="t" style="left:1303.45px;top:681.70px;transform:scaleX(0.9250);-webkit-text-stroke:0.2px #000;">500,00</span>
<span class="t" style="left:1477.22px;top:681.70px;transform:scaleX(0.9250);-webkit-text-stroke:0.2px #000;">75,00</span>
<span class="t" style="left:1648.65px;top:681.70px;transform:scaleX(0.9250);-webkit-text-stroke:0.2px #000;">575,00</span>
<div class="cb" style="left:1752px;top:681px;width:19px;height:19px;background:#fff;border:1px solid #c2c2c2;border-radius:1px;box-shadow:inset 0 0 0 1px rgba(200,200,200,.4);"></div>
<div class="cb" style="left:1857px;top:681px;width:19px;height:19px;background:#fff;border:1px solid #c2c2c2;border-radius:1px;box-shadow:inset 0 0 0 1px rgba(200,200,200,.4);"></div>
</div>
<div class="row" style="left:0;top:0">
<div style="left:44px;top:707px;width:445px;height:31px;background:#ffffe1;"></div>
<div style="left:615px;top:707px;width:567px;height:31px;background:#bbdefb;"></div>
<div style="left:1182px;top:707px;width:526px;height:31px;background:#dfe879;"></div>
<div style="left:1807px;top:707px;width:116px;height:31px;background:#ffffe1;"></div>
<div style="left:1px;top:738px;width:1999px;height:1px;background:rgba(238,237,236,.8);"></div>
<div class="cb" style="left:12px;top:713px;width:19px;height:19px;background:#fff;border:1px solid #c2c2c2;border-radius:1px;box-shadow:inset 0 0 0 1px rgba(200,200,200,.4);"></div>
<span class="t" style="left:55.35px;top:713.70px;transform:scaleX(0.9025);-webkit-text-stroke:0.2px #000;">CZ</span>
<span class="t" style="left:176.49px;top:713.70px;transform:scaleX(0.9250);-webkit-text-stroke:0.2px #000;">10%</span>
<span class="t" style="left:330.45px;top:713.70px;transform:scaleX(0.8937);-webkit-text-stroke:0.2px #000;">SOTI</span>
<span class="t" style="left:772.39px;top:713.70px;transform:scaleX(0.9250);-webkit-text-stroke:0.2px #000;">0,00</span>
<span class="t" style="left:944.79px;top:713.70px;transform:scaleX(0.9250);-webkit-text-stroke:0.2px #000;">0,00</span>
<span class="t" style="left:1141.59px;top:713.70px;transform:scaleX(0.9250);-webkit-text-stroke:0.2px #000;">0,00</span>
<span class="t" style="left:1322.59px;top:713.70px;transform:scaleX(0.9250);-webkit-text-stroke:0.2px #000;">0,00</span>
<span class="t" style="left:1486.79px;top:713.70px;transform:scaleX(0.9250);-webkit-text-stroke:0.2px #000;">0,00</span>
<span class="t" style="left:1667.79px;top:713.70px;transform:scaleX(0.9250);-webkit-text-stroke:0.2px #000;">0,00</span>
<div class="cb" style="left:1752px;top:713px;width:19px;height:19px;background:#fff;border:1px solid #c2c2c2;border-radius:1px;box-shadow:inset 0 0 0 1px rgba(200,200,200,.4);"></div>
<div class="cb" style="left:1857px;top:713px;width:19px;height:19px;background:#fff;border:1px solid #c2c2c2;border-radius:1px;box-shadow:inset 0 0 0 1px rgba(200,200,200,.4);"></div>
</div>
<div class="row" style="left:0;top:0">
<div style="left:44px;top:739px;width:445px;height:31px;background:#ffffe1;"></div>
<div style="left:615px;top:739px;width:567px;height:31px;background:#bbdefb;"></div>
<div style="left:1182px;top:739px;width:526px;height:31px;background:#dfe879;"></div>
<div style="left:1807px;top:739px;width:116px;height:31px;background:#ffffe1;"></div>
<div style="left:1px;top:770px;width:1999px;height:1px;background:rgba(238,237,236,.8);"></div>
<div class="cb" style="left:12px;top:745px;width:19px;height:19px;background:#fff;border:1px solid #c2c2c2;border-radius:1px;box-shadow:inset 0 0 0 1px rgba(200,200,200,.4);"></div>
<span class="t" style="left:55.35px;top:745.70px;transform:scaleX(0.9025);-webkit-text-stroke:0.2px #000;">CZ</span>
<span class="t" style="left:177.13px;top:745.70px;transform:scaleX(0.9250);-webkit-text-stroke:0.2px #000;">0%</span>
<span class="t" style="left:330.45px;top:745.70px;transform:scaleX(0.8937);-webkit-text-stroke:0.2px #000;">SOTI</span>
<span class="t" style="left:772.39px;top:745.70px;transform:scaleX(0.9250);-webkit-text-stroke:0.2px #000;">0,00</span>
<span class="t" style="left:944.79px;top:745.70px;transform:scaleX(0.9250);-webkit-text-stroke:0.2px #000;">0,00</span>
<span class="t" style="left:1141.59px;top:745.70px;transform:scaleX(0.9250);-webkit-text-stroke:0.2px #000;">0,00</span>
<span class="t" style="left:1322.59px;top:745.70px;transform:scaleX(0.9250);-webkit-text-stroke:0.2px #000;">0,00</span>
<span class="t" style="left:1486.79px;top:745.70px;transform:scaleX(0.9250);-webkit-text-stroke:0.2px #000;">0,00</span>
<span class="t" style="left:1667.79px;top:745.70px;transform:scaleX(0.9250);-webkit-text-stroke:0.2px #000;">0,00</span>
<div class="cb" style="left:1752px;top:745px;width:19px;height:19px;background:#fff;border:1px solid #c2c2c2;border-radius:1px;box-shadow:inset 0 0 0 1px rgba(200,200,200,.4);"></div>
<div class="cb" style="left:1857px;top:745px;width:19px;height:19px;background:#fff;border:1px solid #c2c2c2;border-radius:1px;box-shadow:inset 0 0 0 1px rgba(200,200,200,.4);"></div>
</div>
<div class="row" style="left:0;top:0">
<div style="left:44px;top:771px;width:445px;height:31px;background:#ffffe1;"></div>
<div style="left:615px;top:771px;width:567px;height:31px;background:#bbdefb;"></div>
<div style="left:1182px;top:771px;width:526px;height:31px;background:#dfe879;"></div>
<div style="left:1807px;top:771px;width:116px;height:31px;background:#ffffe1;"></div>
<div style="left:1px;top:802px;width:1999px;height:1px;background:rgba(238,237,236,.8);"></div>
<div class="cb" style="left:12px;top:777px;width:19px;height:19px;background:#fff;border:1px solid #c2c2c2;border-radius:1px;box-shadow:inset 0 0 0 1px rgba(200,200,200,.4);"></div>
<span class="t" style="left:55.35px;top:777.70px;transform:scaleX(0.9025);-webkit-text-stroke:0.2px #000;">CZ</span>
<span class="t" style="left:177.25px;top:777.70px;transform:scaleX(0.9250);-webkit-text-stroke:0.2px #000;">ZW</span>
<span class="t" style="left:330.45px;top:777.70px;transform:scaleX(0.8937);-webkit-text-stroke:0.2px #000;">SOTI</span>
<span class="t" style="left:772.39px;top:777.70px;transform:scaleX(0.9250);-webkit-text-stroke:0.2px #000;">0,00</span>
<span class="t" style="left:944.79px;top:777.70px;transform:scaleX(0.9250);-webkit-text-stroke:0.2px #000;">0,00</span>
<span class="t" style="left:1141.59px;top:777.70px;transform:scaleX(0.9250);-webkit-text-stroke:0.2px #000;">0,00</span>
<span class="t" style="left:1322.59px;top:777.70px;transform:scaleX(0.9250);-webkit-text-stroke:0.2px #000;">0,00</span>
<span class="t" style="left:1486.79px;top:777.70px;transform:scaleX(0.9250);-webkit-text-stroke:0.2px #000;">0,00</span>
<span class="t" style="left:1667.79px;top:777.70px;transform:scaleX(0.9250);-webkit-text-stroke:0.2px #000;">0,00</span>
<div class="cb" style="left:1752px;top:777px;width:19px;height:19px;background:#fff;border:1px solid #c2c2c2;border-radius:1px;box-shadow:inset 0 0 0 1px rgba(200,200,200,.4);"></div>
<div class="cb" style="left:1857px;top:777px;width:19px;height:19px;background:#fff;border:1px solid #c2c2c2;border-radius:1px;box-shadow:inset 0 0 0 1px rgba(200,200,200,.4);"></div>
</div>
<div style="left:1px;top:675px;width:1998px;height:1px;background:#666;"></div>
<div style="left:44px;top:676px;width:1955px;height:1px;background:#4a9fd2;"></div>
<div style="left:1px;top:705px;width:1998px;height:1px;background:rgba(96,96,96,.5);"></div>
<div style="left:1px;top:706px;width:1998px;height:1px;background:#6a6a6a;"></div>
<div style="left:1px;top:676px;width:5px;height:30px;background:#0a72b2;"></div>
<div style="left:1182px;top:676px;width:181px;height:30px;border:solid #0a72b2;border-width:2px 3px;"></div>
</section>
<footer>
<div style="left:0px;top:898px;width:2002px;height:53px;background:#f9f8f6;"></div>
<div style="left:0px;top:898px;width:2002px;height:1px;background:#dddbd9;"></div>
<div style="left:0px;top:947px;width:2002px;height:1px;background:#e1dfdd;"></div>
<svg style="left:19px;top:912px;" width="12" height="24" viewBox="0 0 12 24" fill="none"><ellipse cx="6" cy="4.500" rx="2" ry="1.700" fill="#2b2b2b"/><ellipse cx="6" cy="11" rx="2" ry="1.700" fill="#2b2b2b"/><ellipse cx="6" cy="17.500" rx="2" ry="1.700" fill="#2b2b2b"/></svg>
<span class="t" style="left:70.29px;top:915.70px;font-weight:bold;color:#1a1a1a;transform:scaleX(0.8918);">Kwoty w stawkach VAT</span>
<div style="left:71px;top:942px;width:181px;height:5px;background:#0089d0;"></div>
<span class="t" style="left:297.02px;top:915.70px;color:#575757;transform:scaleX(0.9874);-webkit-text-stroke:0.2px #575757;">Zaliczki</span>
<span class="t" style="left:403.12px;top:915.70px;color:#575757;transform:scaleX(0.9551);-webkit-text-stroke:0.2px #575757;">Wymiary kontrolingowe</span>
<span class="t" style="left:631.92px;top:915.70px;color:#575757;transform:scaleX(0.9392);-webkit-text-stroke:0.2px #575757;">Wymagane dokumenty</span>
<span class="t" style="left:854.39px;top:915.70px;color:#575757;transform:scaleX(0.9597);-webkit-text-stroke:0.2px #575757;">Sumy walutowe</span>
<span class="t" style="left:1021.96px;top:915.70px;color:#575757;transform:scaleX(0.9443);-webkit-text-stroke:0.2px #575757;">Dodatkowe dane dla JPK</span>
<svg style="left:990px;top:899.8px;" width="20" height="4" viewBox="0 0 20 4" fill="none"><path d="M1 2h5M7.500 2h5M14 2h5" stroke="#c6c4c2" stroke-width="1"/></svg>
</footer>
<div style="left:0px;top:0px;width:1px;height:953px;background:#0089d0;"></div>
<div style="left:2001px;top:43px;width:1px;height:910px;background:#0089d0;"></div>
<div style="left:2000px;top:43px;width:1px;height:910px;background:rgba(0,137,208,.45);"></div>
<div style="left:0px;top:952px;width:2002px;height:1px;background:#0089d0;"></div>
<div style="left:0px;top:951px;width:2002px;height:1px;background:rgba(0,137,208,.3);"></div>
</div>
</body></html>
